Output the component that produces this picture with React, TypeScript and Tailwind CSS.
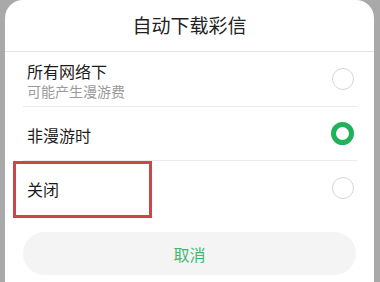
const font = { fontFamily: '"Noto Sans CJK SC", "Noto Sans", sans-serif' }

interface Option {
  label: string
  hint?: string
  checked: boolean
  marked?: boolean
}

const OPTIONS: Option[] = [
  { label: '所有网络下', hint: '可能产生漫游费', checked: false },
  { label: '非漫游时', checked: true },
  { label: '关闭', checked: false, marked: true },
]

function Radio({ checked }: { checked: boolean }) {
  if (checked) {
    return <div className="w-[23px] h-[23px] rounded-full border-[5px] border-[#1fb25a]" />
  }
  return <div className="w-[22px] h-[22px] rounded-full border border-[#d6d6d6]" />
}

export default function App() {
  return (
    <div className="w-[380px] h-[282px] bg-[#a9a9a9] pl-[5px] pr-[6px] overflow-hidden" style={font}>
      <div className="h-full bg-white rounded-t-[18px] flex flex-col">
        {/* Title */}
        <div className="h-[52px] flex items-center justify-center border-b border-[#e3e3e3] text-[19px] text-[#222]">
          自动下载彩信
        </div>

        {/* Options */}
        <div className="pl-[18px] pr-[17px]">
          {OPTIONS.map((opt, i) => (
            <div
              key={opt.label}
              className={`relative flex items-center justify-between pl-[4px] pr-[3px] ${
                i === 0 ? 'h-[55px]' : 'h-[54px]'
              } ${i < OPTIONS.length - 1 ? 'border-b border-[#ebebeb]' : ''}`}
            >
              <div className={`flex flex-col ${opt.hint ? 'pt-[4px]' : 'pt-[2px]'}`}>
                <span className="text-[16px] leading-[20px] text-[#1c1c1c]">{opt.label}</span>
                {opt.hint && <span className="text-[14px] leading-[20px] text-[#9a9a9a]">{opt.hint}</span>}
              </div>
              <Radio checked={opt.checked} />
              {opt.marked && (
                <div className="absolute left-[-10px] top-0 w-[139px] h-[57px] border-[3px] border-[#c9474b]" />
              )}
            </div>
          ))}
        </div>

        {/* Cancel */}
        <div className="px-[18px] pt-[17px]">
          <div className="h-[43px] rounded-full bg-[#f4f4f4] flex items-center justify-center text-[16px] text-[#3dba6e]">
            取消
          </div>
        </div>
      </div>
    </div>
  )
}
